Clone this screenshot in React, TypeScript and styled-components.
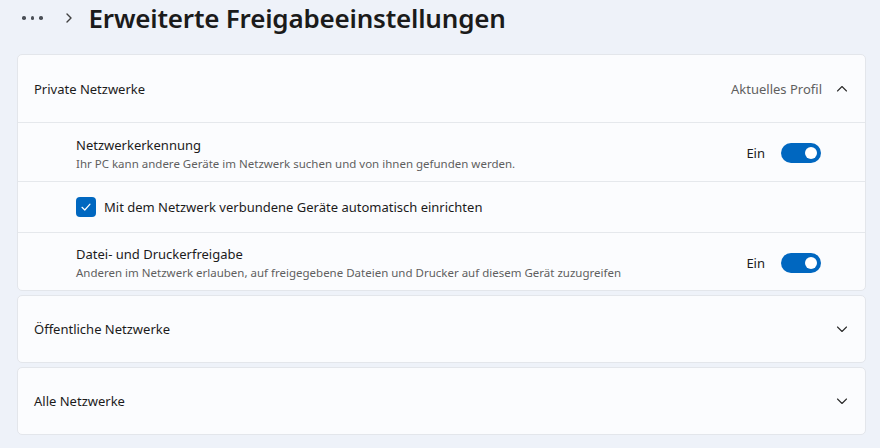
import React from "react";
import styled, { createGlobalStyle } from "styled-components";

const Global = createGlobalStyle`
  html, body { margin: 0; padding: 0; }
  body {
    background: #eef2f9;
    font-family: "Segoe UI", "Noto Sans", "Open Sans", sans-serif;
    color: #1b1b1b;
    width: 880px;
    height: 448px;
    overflow: hidden;
  }
`;

const Page = styled.div`
  display: flex;
  flex-direction: column;
  padding: 0 14px 0 17px;
`;

const Header = styled.div`
  display: flex;
  align-items: center;
  height: 36px;
  margin-bottom: 18px;
  padding-left: 5px;
`;

const Dots = styled.div`
  display: flex;
  gap: 5px;
  align-items: center;
  margin-right: 22px;
`;

const Dot = styled.span`
  width: 3.5px;
  height: 3.5px;
  border-radius: 50%;
  background: #4a4f56;
`;

const Crumb = styled.span`
  display: flex;
  align-items: center;
  margin-right: 16px;
  color: #404040;
`;

const Title = styled.h1`
  margin: 0;
  font-size: 26px;
  font-weight: 600;
  letter-spacing: -0.2px;
  color: #1b1b1b;
`;

const Card = styled.section`
  background: #fbfcfe;
  border: 1px solid #e3e6eb;
  border-radius: 5px;
  margin-bottom: 4px;
  display: flex;
  flex-direction: column;
`;

const CardHead = styled.div<{ $divider?: boolean }>`
  height: ${(p) => (p.$divider ? 67 : 66)}px;
  display: flex;
  align-items: center;
  padding: 0 17px 0 16px;
  border-bottom: ${(p) => (p.$divider ? "1px solid #e5e8ec" : "none")};
  font-size: 13px;
`;

const HeadLabel = styled.span`
  flex: 1;
`;

const Secondary = styled.span`
  color: #5f5f5f;
  margin-right: 14px;
`;

const Row = styled.div<{ $h: number; $last?: boolean }>`
  height: ${(p) => p.$h}px;
  display: flex;
  align-items: center;
  padding: 0 44px 0 58px;
  border-bottom: ${(p) => (p.$last ? "none" : "1px solid #e5e8ec")};
`;

const RowText = styled.div`
  flex: 1;
  display: flex;
  flex-direction: column;
  gap: 2px;
  padding-top: 2px;
`;

const RowTitle = styled.span`
  font-size: 13px;
  line-height: 18px;
`;

const RowSub = styled.span`
  font-size: 11.5px;
  line-height: 15px;
  color: #5f5f5f;
`;

const ToggleLabel = styled.span`
  font-size: 13px;
  margin-right: 16px;
  padding-top: 2px;
`;

const Toggle = styled.span`
  width: 40px;
  height: 20px;
  border-radius: 10px;
  background: #0067c0;
  display: flex;
  align-items: center;
  justify-content: flex-end;
  padding-right: 4px;
  box-sizing: border-box;
  margin-top: 2px;
`;

const Knob = styled.span`
  width: 12px;
  height: 12px;
  border-radius: 50%;
  background: #ffffff;
`;

const Check = styled.span`
  width: 20px;
  height: 20px;
  border-radius: 4px;
  background: #0067c0;
  display: flex;
  align-items: center;
  justify-content: center;
  margin-right: 8px;
`;

const CheckLabel = styled.span`
  font-size: 13px;
`;

const Chevron = ({ up }: { up?: boolean }) => (
  <svg width="12" height="12" viewBox="0 0 12 12">
    <path
      d={up ? "M1.5 8 L6 3.5 L10.5 8" : "M1.5 4 L6 8.5 L10.5 4"}
      fill="none"
      stroke="#2b2b2b"
      strokeWidth="1.1"
      strokeLinecap="round"
      strokeLinejoin="round"
    />
  </svg>
);

const Switch = () => (
  <>
    <ToggleLabel>Ein</ToggleLabel>
    <Toggle>
      <Knob />
    </Toggle>
  </>
);

export default function App() {
  return (
    <>
      <Global />
      <Page>
        <Header>
          <Dots>
            <Dot />
            <Dot />
            <Dot />
          </Dots>
          <Crumb>
            <svg width="8" height="12" viewBox="0 0 8 12">
              <path d="M2 2 L6 6 L2 10" fill="none" stroke="#404040" strokeWidth="1.4" strokeLinecap="round" strokeLinejoin="round" />
            </svg>
          </Crumb>
          <Title>Erweiterte Freigabeeinstellungen</Title>
        </Header>

        <Card>
          <CardHead $divider>
            <HeadLabel>Private Netzwerke</HeadLabel>
            <Secondary>Aktuelles Profil</Secondary>
            <Chevron up />
          </CardHead>
          <Row $h={58}>
            <RowText>
              <RowTitle>Netzwerkerkennung</RowTitle>
              <RowSub>Ihr PC kann andere Geräte im Netzwerk suchen und von ihnen gefunden werden.</RowSub>
            </RowText>
            <Switch />
          </Row>
          <Row $h={50}>
            <Check>
              <svg width="12" height="12" viewBox="0 0 12 12">
                <path d="M2 6.3 L4.8 9 L10 3.2" fill="none" stroke="#fff" strokeWidth="1.2" strokeLinecap="round" strokeLinejoin="round" />
              </svg>
            </Check>
            <CheckLabel>Mit dem Netzwerk verbundene Geräte automatisch einrichten</CheckLabel>
          </Row>
          <Row $h={57} $last>
            <RowText>
              <RowTitle>Datei- und Druckerfreigabe</RowTitle>
              <RowSub>Anderen im Netzwerk erlauben, auf freigegebene Dateien und Drucker auf diesem Gerät zuzugreifen</RowSub>
            </RowText>
            <Switch />
          </Row>
        </Card>

        <Card>
          <CardHead>
            <HeadLabel>Öffentliche Netzwerke</HeadLabel>
            <Chevron />
          </CardHead>
        </Card>

        <Card>
          <CardHead>
            <HeadLabel>Alle Netzwerke</HeadLabel>
            <Chevron />
          </CardHead>
        </Card>
      </Page>
    </>
  );
}
